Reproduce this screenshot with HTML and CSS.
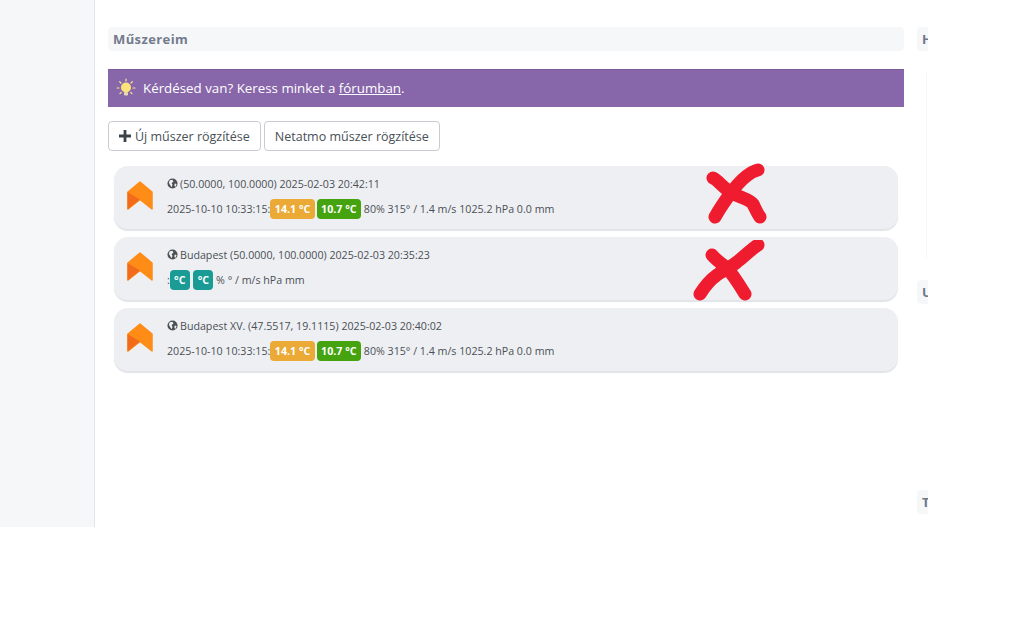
FILE: index.html
```html
<!DOCTYPE html>
<html lang="hu">
<head>
<meta charset="utf-8">
<title>Műszereim</title>
<link rel="stylesheet" href="styles.css">
</head>
<body>
<div class="app">
  <aside class="sidebar"></aside>
  <main class="main">
    <h2 class="section-title">Műszereim</h2>
    <div class="notice">
      <svg class="bulb" viewBox="0 0 20 20" width="20" height="20" aria-hidden="true">
        <g stroke="#f7e3a0" stroke-width="1.2" stroke-linecap="round">
          <path d="M10 1v2M3.600 3.600l1.400 1.400M16.400 3.600 15 5M1 10h2M17 10h2M4 15.500l1.200-1M16 15.500l-1.200-1"/>
        </g>
        <circle cx="10" cy="9.500" r="5" fill="#fbe27a"/>
        <rect x="8" y="14" width="4" height="3.500" rx="1" fill="#e8d9b0"/>
      </svg>
      <span>Kérdésed van? Keress minket a <a href="#">fórumban</a>.</span>
    </div>
    <div class="actions">
      <button class="btn"><svg class="plus" viewBox="0 0 12 12" width="12" height="12" aria-hidden="true"><path d="M4.600 0h2.800v4.600H12v2.800H7.400V12H4.600V7.400H0V4.600h4.600z"/></svg>Új műszer rögzítése</button>
      <button class="btn">Netatmo műszer rögzítése</button>
    </div>
    <div class="cards">
      <article class="card">
        <svg class="logo" viewBox="0 0 26 29" width="26" height="29" aria-hidden="true"><path d="M13 1 25 11V28L13 18.500 1 28V11Z" fill="#ff8c17" stroke="#ff8c17" stroke-width="1.500" stroke-linejoin="round"/><path d="M.5 11 13 18.500 .5 28.500Z" fill="#f26b1a"/></svg>
        <div class="card-body">
          <div class="line1"><svg class="globe" viewBox="0 0 12 12" width="11" height="11" aria-hidden="true"><circle cx="6" cy="6" r="5.500" fill="#4a4f55"/><path d="M3 2.500 6 2l1 2-2 1.500 1 2-1 2.500L3 7 2 5ZM8.500 6l2 .5L9 10 8 8Z" fill="#eeeff3"/></svg>(50.0000, 100.0000) 2025-02-03 20:42:11</div>
          <div class="line2">2025-10-10 10:33:15:<span class="tag tag-orange">14.1 °C</span> <span class="tag tag-green">10.7 °C</span> 80% 315° / 1.4 m/s 1025.2 hPa 0.0 mm</div>
        </div>
      </article>
      <article class="card">
        <svg class="logo" viewBox="0 0 26 29" width="26" height="29" aria-hidden="true"><path d="M13 1 25 11V28L13 18.500 1 28V11Z" fill="#ff8c17" stroke="#ff8c17" stroke-width="1.500" stroke-linejoin="round"/><path d="M.5 11 13 18.500 .5 28.500Z" fill="#f26b1a"/></svg>
        <div class="card-body">
          <div class="line1"><svg class="globe" viewBox="0 0 12 12" width="11" height="11" aria-hidden="true"><circle cx="6" cy="6" r="5.500" fill="#4a4f55"/><path d="M3 2.500 6 2l1 2-2 1.500 1 2-1 2.500L3 7 2 5ZM8.500 6l2 .5L9 10 8 8Z" fill="#eeeff3"/></svg>Budapest (50.0000, 100.0000) 2025-02-03 20:35:23</div>
          <div class="line2">:<span class="tag tag-teal">°C</span> <span class="tag tag-teal">°C</span> % ° / m/s hPa mm</div>
        </div>
      </article>
      <article class="card">
        <svg class="logo" viewBox="0 0 26 29" width="26" height="29" aria-hidden="true"><path d="M13 1 25 11V28L13 18.500 1 28V11Z" fill="#ff8c17" stroke="#ff8c17" stroke-width="1.500" stroke-linejoin="round"/><path d="M.5 11 13 18.500 .5 28.500Z" fill="#f26b1a"/></svg>
        <div class="card-body">
          <div class="line1"><svg class="globe" viewBox="0 0 12 12" width="11" height="11" aria-hidden="true"><circle cx="6" cy="6" r="5.500" fill="#4a4f55"/><path d="M3 2.500 6 2l1 2-2 1.500 1 2-1 2.500L3 7 2 5ZM8.500 6l2 .5L9 10 8 8Z" fill="#eeeff3"/></svg>Budapest XV. (47.5517, 19.1115) 2025-02-03 20:40:02</div>
          <div class="line2">2025-10-10 10:33:15:<span class="tag tag-orange">14.1 °C</span> <span class="tag tag-green">10.7 °C</span> 80% 315° / 1.4 m/s 1025.2 hPa 0.0 mm</div>
        </div>
      </article>
    </div>
  </main>
  <aside class="right">
    <h2 class="right-title">H</h2>
    <div class="right-rule"></div>
    <h2 class="right-title right-u">U</h2>
    <h2 class="right-title right-t">T</h2>
  </aside>
</div>
<svg class="cross cross-a" viewBox="0 0 62 62" width="62" height="62" aria-hidden="true"><path d="M8 16C13 18 18 26 27 31 36 36 44 37 48 42 50 46 52 51 55 55M53 8C44 10 36 18 28 28 22 36 15 46 10 55" fill="none" stroke="#ee1c2e" stroke-width="13" stroke-linecap="round" stroke-linejoin="round"/></svg>
<svg class="cross cross-b" viewBox="0 0 74 62" width="74" height="62" aria-hidden="true"><path d="M20 15C24 20 30 24 35 28 42 36 48 46 53 54M66 5C58 10 52 17 45 22 38 28 30 31 25 35 18 40 13 46 8 54" fill="none" stroke="#ee1c2e" stroke-width="13" stroke-linecap="round" stroke-linejoin="round"/></svg>
</body>
</html>
```

FILE: styles.css
```css
* { box-sizing: border-box; }
html, body { margin: 0; padding: 0; background: #fff; }
body {
  position: relative;
  width: 1024px;
  height: 640px;
  overflow: hidden;
  font-family: "Open Sans", sans-serif;
  color: #495057;
}
.app {
  display: flex;
  width: 928px;
  height: 527px;
  overflow: hidden;
}
.sidebar {
  flex: 0 0 95px;
  background: #f6f7f9;
  border-right: 1px solid #e2e4e9;
}
.main {
  flex: 0 0 809px;
  padding: 27px 0 0 13px;
}
.section-title {
  margin: 0;
  height: 24px;
  padding: 0 5px;
  background: #f6f7f9;
  border-radius: 4px;
  color: #737b8c;
  font-size: 13px;
  font-weight: 700;
  line-height: 24px;
  letter-spacing: 0.4px;
}
.notice {
  display: flex;
  align-items: center;
  gap: 7px;
  height: 38px;
  margin-top: 18px;
  padding: 0 0 1px 8px;
  background: #8766a9;
  border-top: 1px solid #7d5c9f;
  color: #fff;
  font-size: 13.330px;
}
.notice a { color: #fff; text-decoration: underline; }
.bulb { flex: none; }
.actions {
  display: flex;
  gap: 3px;
  margin-top: 14px;
}
.btn {
  display: flex;
  align-items: center;
  gap: 4px;
  height: 30px;
  padding: 0 10px;
  background: #fff;
  border: 1px solid #c8ccd2;
  border-radius: 4px;
  color: #495057;
  font-family: inherit;
  font-size: 12.500px;
}
.plus { fill: #3d4247; }
.cards {
  display: flex;
  flex-direction: column;
  gap: 8px;
  margin: 15px 6px 0;
}
.card {
  display: flex;
  align-items: center;
  gap: 14px;
  height: 63px;
  padding: 0 13px 1px;
  background: #eeeff3;
  border-radius: 14px;
  box-shadow: 0 2px 1px #e2e4e7;
}
.logo { flex: none; margin-bottom: 3px; }
.card-body {
  display: flex;
  flex-direction: column;
  gap: 8px;
  font-size: 10.670px;
  color: #4a4f55;
}
.line1 { display: flex; align-items: center; gap: 2px; height: 14px; }
.line2 { height: 19px; line-height: 19px; white-space: pre-wrap; }
.globe { flex: none; }
.tag {
  display: inline-block;
  height: 20px;
  padding: 0 4.500px;
  border-radius: 4px;
  color: #fff;
  font-weight: 700;
  line-height: 20px;
}
.tag-orange { background: #eaaa35; }
.tag-green { background: #44a30f; margin-left: -1px; }
.tag-teal { background: #1a9b95; padding: 0 4.250px; }
.tag-teal + .tag-teal { margin-left: 1px; }
.right {
  flex: 0 0 11px;
  margin-left: 13px;
  display: flex;
  flex-direction: column;
  padding-top: 27px;
}
.right-title {
  flex: none;
  margin: 0;
  width: 11px;
  height: 24px;
  padding-left: 5px;
  background: #f6f7f9;
  border-radius: 4px 0 0 4px;
  color: #6e7687;
  font-size: 13px;
  font-weight: 700;
  line-height: 24px;
  overflow: hidden;
}
.right-rule {
  flex: none;
  width: 1px;
  height: 186px;
  margin: 21px 0 0 9px;
  background: #f7f7f9;
}
.right-u { margin-top: 22px; }
.right-t { margin-top: 186px; }
.cross { position: absolute; }
.cross-a { left: 705px; top: 162px; }
.cross-b { left: 692px; top: 240px; }
```
